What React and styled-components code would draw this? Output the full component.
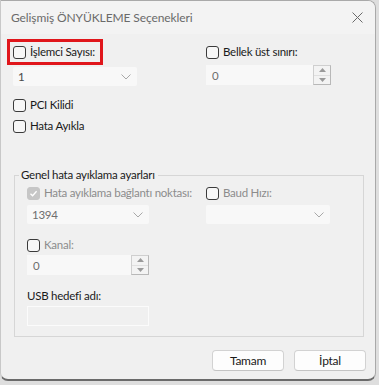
import React from "react";
import styled, { createGlobalStyle } from "styled-components";

const Global = createGlobalStyle`
  html, body {
    margin: 0;
    padding: 0;
    background: #dedede;
  }
  body {
    font-family: Lato, "Noto Sans", sans-serif;
    font-size: 11.5px;
    letter-spacing: -0.25px;
    color: #1a1a1a;
  }
`;

const Dialog = styled.div`
  width: 376px;
  height: 381px;
  background: #f0f0f0;
  border: 1px solid #a9a9a9;
  border-left-color: #c8c8c8;
  border-radius: 0 8px 8px 8px;
  box-sizing: border-box;
  display: flex;
  flex-direction: column;
  overflow: hidden;
  border-bottom: 2px solid #6a6a6a;
`;

const TitleBar = styled.div`
  height: 33px;
  display: flex;
  align-items: center;
  justify-content: space-between;
  padding: 0 10px 0 10px;
  background: #f3f3f3;
  > span {
    color: #6a6a6a;
    font-size: 12px;
    letter-spacing: -0.1px;
  }
`;

const CloseX = styled.svg`
  width: 11px;
  height: 11px;
  margin-right: 2px;
`;

const Body = styled.div`
  flex: 1;
  display: flex;
  flex-direction: column;
  padding: 5px 0 0 0;
`;

const Columns = styled.div`
  display: grid;
  grid-template-columns: ${(p) => p.$left}px 1fr;
  padding-left: ${(p) => p.$pad}px;
`;

const Col = styled.div`
  display: flex;
  flex-direction: column;
  min-width: 0;
`;

const Highlight = styled.div`
  align-self: flex-start;
  margin-left: -6px;
  border: 3px solid #e0161b;
  padding: 2px 5px 2px 3px;
  display: flex;
`;

const CheckRow = styled.label`
  display: flex;
  align-items: center;
  height: ${(p) => p.$h || 14}px;
  line-height: 14px;
  gap: 4px;
  color: ${(p) => (p.$disabled ? "#8c8c8c" : "#1a1a1a")};
  white-space: nowrap;
`;

const Box = styled.span`
  width: 13px;
  height: 13px;
  box-sizing: border-box;
  border-radius: 3px;
  border: 1px solid ${(p) => (p.$checked ? "#c6c6c6" : "#3b3b3b")};
  background: ${(p) => (p.$checked ? "#c6c6c6" : "#f7f7f7")};
  display: flex;
  align-items: center;
  justify-content: center;
  flex: none;
`;

const Combo = styled.div`
  width: ${(p) => p.$w}px;
  height: 19px;
  box-sizing: border-box;
  background: #f8f8f8;
  border-radius: 2px;
  display: flex;
  align-items: center;
  justify-content: space-between;
  padding: 0 6px 0 5px;
  color: ${(p) => (p.$dim ? "#6e6e6e" : "#4a4a4a")};
  margin-top: ${(p) => p.$mt}px;
`;

const Spin = styled.div`
  width: ${(p) => p.$w}px;
  height: 20px;
  box-sizing: border-box;
  background: #f8f8f8;
  border: 1px solid #f8f8f8;
  display: flex;
  align-items: stretch;
  color: #6e6e6e;
  margin-top: ${(p) => p.$mt}px;
  > span {
    flex: 1;
    display: flex;
    align-items: center;
    padding-left: 5px;
  }
`;

const Arrows = styled.div`
  width: 16px;
  border: 1px solid #cfcfcf;
  border-right-color: #b8b8b8;
  border-bottom-color: #b8b8b8;
  margin: -1px -1px -1px 0;
  display: flex;
  flex-direction: column;
  background: #f3f3f3;
  > div {
    flex: 1;
    display: flex;
    align-items: center;
    justify-content: center;
  }
  > div + div {
    border-top: 1px solid #e0e0e0;
  }
`;

const Group = styled.fieldset`
  margin: 35px 11px 0 13px;
  padding: 0 0 10px 0;
  border: 1px solid #d6d6d6;
  border-radius: 0;
  min-width: 0;
  > legend {
    margin-left: 4px;
    padding: 0 3px 0 2px;
    color: #1a1a1a;
    line-height: 14px;
  }
`;

const Label = styled.div`
  color: #1a1a1a;
  margin-top: ${(p) => p.$mt}px;
  height: 14px;
  line-height: 14px;
`;

const TextBox = styled.div`
  width: 122px;
  height: 20px;
  box-sizing: border-box;
  border: 1px solid #fbfbfb;
  background: #f0f0f0;
  margin-top: ${(p) => p.$mt}px;
`;

const Footer = styled.div`
  display: flex;
  justify-content: flex-end;
  gap: 10px;
  padding: 13px 9px 0 0;
`;

const Button = styled.button`
  width: 72px;
  height: 21px;
  box-sizing: border-box;
  border: 1px solid #d2d2d2;
  border-bottom-color: #c4c4c4;
  border-radius: 4px;
  background: #fdfdfd;
  font-family: inherit;
  font-size: 12px;
  letter-spacing: inherit;
  color: #1a1a1a;
  padding: 0;
`;

const Check = () => (
  <svg width="9" height="9" viewBox="0 0 9 9">
    <path d="M1.5 4.8 L3.6 6.8 L7.6 2.2" fill="none" stroke="#fff" strokeWidth="1.3" />
  </svg>
);

const Checkbox = ({ checked, disabled, label, h }) => (
  <CheckRow $disabled={disabled} $h={h}>
    <Box $checked={checked}>{checked && <Check />}</Box>
    {label}
  </CheckRow>
);

const Chevron = () => (
  <svg width="10" height="6" viewBox="0 0 10 6">
    <path d="M0.5 0.5 L5 5 L9.5 0.5" fill="none" stroke="#a8a8a8" strokeWidth="1" />
  </svg>
);

const Tri = ({ up }) => (
  <svg width="7" height="4" viewBox="0 0 7 4">
    <path d={up ? "M0 4 L3.5 0 L7 4 Z" : "M0 0 L3.5 4 L7 0 Z"} fill="#9a9a9a" />
  </svg>
);

const Spinner = ({ w, mt, value }) => (
  <Spin $w={w} $mt={mt}>
    <span>{value}</span>
    <Arrows>
      <div>
        <Tri up />
      </div>
      <div>
        <Tri />
      </div>
    </Arrows>
  </Spin>
);

const Gap = styled.div`
  height: ${(p) => p.$h}px;
  flex: none;
`;

export default function App() {
  return (
    <>
      <Global />
      <Dialog>
        <TitleBar>
          <span>Gelişmiş ÖNYÜKLEME Seçenekleri</span>
          <CloseX viewBox="0 0 11 11">
            <path d="M0.5 0.5 L10.5 10.5 M10.5 0.5 L0.5 10.5" stroke="#6a6a6a" strokeWidth="1" />
          </CloseX>
        </TitleBar>
        <Body>
          <Columns $left={193} $pad={12}>
            <Col>
              <Highlight>
                <Checkbox label="İşlemci Sayısı:" h={16} />
              </Highlight>
              <Combo $w={124} $mt={2}>
                <span>1</span>
                <Chevron />
              </Combo>
              <Gap $h={12} />
              <Checkbox label="PCI Kilidi" />
              <Gap $h={7} />
              <Checkbox label="Hata Ayıkla" />
            </Col>
            <Col>
              <Gap $h={6} />
              <Checkbox label="Bellek üst sınırı:" />
              <Spinner w={125} mt={6} value="0" />
            </Col>
          </Columns>
          <Group>
            <legend>Genel hata ayıklama ayarları</legend>
            <Columns $left={179} $pad={12}>
              <Col>
                <Gap $h={4} />
                <Checkbox checked disabled label="Hata ayıklama bağlantı noktası:" />
                <Combo $w={122} $mt={5} $dim>
                  <span>1394</span>
                  <Chevron />
                </Combo>
                <Gap $h={14} />
                <Checkbox disabled label="Kanal:" />
                <Spinner w={122} mt={3} value="0" />
                <Label $mt={14}>USB hedefi adı:</Label>
                <TextBox $mt={3} />
              </Col>
              <Col>
                <Gap $h={4} />
                <Checkbox disabled label="Baud Hızı:" />
                <Combo $w={124} $mt={5}>
                  <span />
                  <Chevron />
                </Combo>
              </Col>
            </Columns>
          </Group>
          <Footer>
            <Button>Tamam</Button>
            <Button>İptal</Button>
          </Footer>
        </Body>
      </Dialog>
    </>
  );
}
